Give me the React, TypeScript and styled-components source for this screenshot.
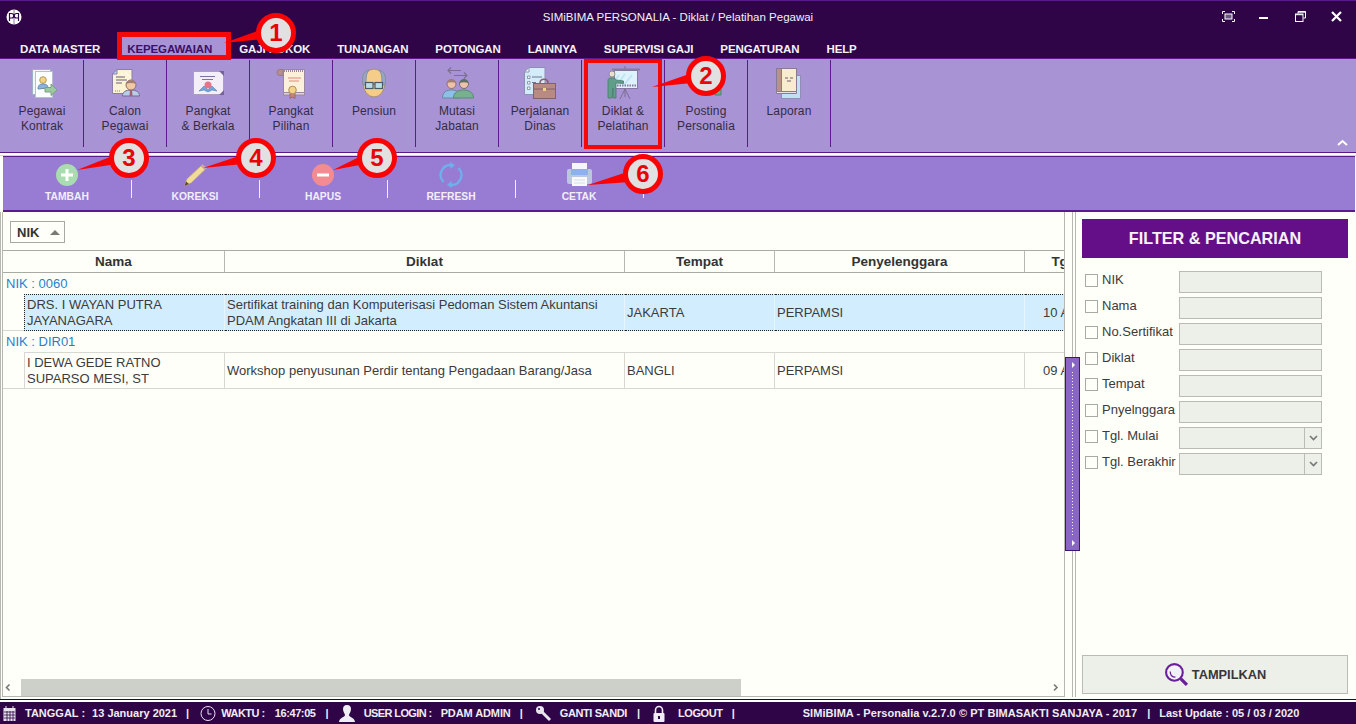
import React from 'react';
import styled, { createGlobalStyle } from 'styled-components';

const Global = createGlobalStyle`
  html, body { margin: 0; padding: 0; width: 1356px; height: 724px; overflow: hidden; background: #fffff9; }
  * { box-sizing: border-box; }
  body { font-family: "Liberation Sans", Arial, sans-serif; }
`;

const Page = styled.div`
  position: relative; width: 1356px; height: 724px; display: flex; flex-direction: column; overflow: hidden;
`;
const Header = styled.header`
  height: 59px; background: #2f0548; border-top: 1px solid #5a1a8a; border-bottom: 1px solid #5a1a8a;
  display: flex; flex-direction: column; flex: none;
`;
const TitleBar = styled.div`
  height: 31px; display: flex; align-items: center; position: relative; flex: none; padding-left: 6px;
`;
const TitleText = styled.div`
  position: absolute; left: 0; right: 0; text-align: center; color: #f2f0f6; font-size: 11.5px;
`;
const WinBtns = styled.div`
  position: absolute; right: 2px; top: 0; height: 31px; display: flex; align-items: center;
`;
const WinBtn = styled.div`
  width: 36px; height: 31px; display: flex; align-items: center; justify-content: center; color: #fff;
`;
const MenuBar = styled.nav`
  display: flex; height: 24px; margin-top: 2px; padding-left: 6.5px; flex: none;
`;
const MenuItem = styled.div<{ $active?: boolean }>`
  margin: 0 ${p => (p.$active ? '0' : '3px')} 0 3px; padding: 3px ${p => (p.$active ? '13.5px' : '10.5px')} 0 10.5px; height: 24px; line-height: 24px; font-size: 11.5px; font-weight: 700; white-space: nowrap; letter-spacing: -0.12px;
  color: ${p => (p.$active ? '#3a1068' : '#f4f2f8')};
  background: ${p => (p.$active ? '#a893d4' : 'transparent')};
`;
const Ribbon = styled.div`
  height: 93px; background: #a893d4; display: flex; flex: none; position: relative; padding: 1px 0 0 1px;
`;
const RibbonItem = styled.div`
  width: 83px; height: 87px; border-right: 1px solid #5c1a8c; display: flex; flex-direction: column; align-items: center; padding-top: 6px; flex: none;
`;
const RibbonIcon = styled.svg`
  width: 36px; height: 34px; flex: none; overflow: visible;
`;
const RibbonLabel = styled.div`
  margin-top: 4px; width: 82px; text-align: center; font-size: 12px; line-height: 15px; color: #342c46; letter-spacing: 0.01em;
`;
const Collapse = styled.svg`
  position: absolute; right: 8px; bottom: 5px; width: 11px; height: 8px;
`;
const RibbonEdge = styled.div`
  height: 4px; flex: none; border-top: 1px solid #5a1a8a; background: #fff; border-bottom: 1px solid #d6d6d0;
`;
const Toolbar = styled.div`
  height: 56px; margin-left: 3px; margin-right: 1px; background: #987cd4; border-bottom: 2px solid #5a1a8a; border-top: 1px solid #5a1a8a; display: flex; flex: none; padding-top: 5px;
`;
const ToolItem = styled.div`
  width: 128px; height: 43px; display: flex; flex-direction: column; align-items: center; position: relative; flex: none;
  &::after { content: ''; position: absolute; right: -1px; top: 18px; height: 18px; border-right: 1px solid #f2eefa; }
`;
const ToolIcon = styled.svg`
  width: 26px; height: 26px; flex: none;
`;
const ToolLabel = styled.div`
  margin-top: 2px; font-size: 10.3px; line-height: 13px; font-weight: 700; color: #f2eefa;
`;
const Main = styled.main`
  flex: 1; display: flex; min-height: 0; background: #fffff9; border-left: 1px solid #b6b8b0;
`;
const LeftPanel = styled.section`
  width: 1063px; margin-left: 1px; border: 1px solid #b6b8b0; border-top: none; display: flex; flex-direction: column; position: relative; flex: none; margin-bottom: 2px; overflow: hidden;
`;
const GroupBar = styled.div`
  height: 38px; padding: 9px 0 0 7px; flex: none;
`;
const NikChip = styled.div`
  width: 55px; height: 22px; border: 1px solid #a8a8a4; display: flex; align-items: center; padding-left: 6px; font-size: 13px; font-weight: 700; color: #333; gap: 11px;
`;
const ChipArrow = styled.span`
  width: 0; height: 0; border-left: 5px solid transparent; border-right: 5px solid transparent; border-bottom: 5px solid #7a7a74;
`;
const Grid = styled.div`
  width: 1061px; overflow: hidden; flex: none;
`;
const Row = styled.div`
  display: grid; grid-template-columns: 222px 400px 150px 250px 116px; width: 1138px;
`;
const HeadCell = styled.div`
  height: 23px; border-top: 1px solid #a8aaa4; border-bottom: 1px solid #a8aaa4; border-right: 1px solid #b6b8b0; text-align: center; font-size: 13.5px; font-weight: 700; color: #333; line-height: 21px; white-space: nowrap;
`;
const GroupRow = styled.div`
  height: 21px; padding-left: 3px; font-size: 13px; line-height: 21px; color: #1f7fcf;
`;
const DataRow = styled.div`
  display: grid; grid-template-columns: 21px 201px 400px 150px 250px 116px; width: 1138px; height: 37px;
`;
const Indent = styled.div`
  border-bottom: 1px solid #d8d8d2;
`;
const Cell = styled.div<{ $selected?: boolean }>`
  display: flex; align-items: center; padding-left: 2px; font-size: 13px; line-height: 16px; color: #3c3a3a; white-space: pre-line;
  background: ${p => (p.$selected ? '#d2eefe' : 'transparent')};
  border-bottom: 1px ${p => (p.$selected ? 'dotted #222' : 'solid #d8d8d2')};
  border-top: 1px ${p => (p.$selected ? 'dotted #222' : 'solid #d8d8d2')};
  border-right: 1px solid ${p => (p.$selected ? '#e6f6ff' : '#d8d8d2')};
`;
const NameCell = styled(Cell)`
  border-left: 1px ${p => (p.$selected ? 'dotted #222' : 'solid #d8d8d2')};
`;
const DateCell = styled(Cell)`
  white-space: nowrap; justify-content: center; padding: 0 3px 0 0;
`;
const HScroll = styled.div`
  position: absolute; left: 0; right: 0; bottom: 0; height: 17px; display: flex; align-items: center;
`;
const ScrollArrow = styled.svg`
  width: 18px; height: 17px; flex: none;
`;
const ScrollThumb = styled.div`
  width: 720px; height: 17px; background: #ccd0c8; flex: none;
`;
const ScrollSpace = styled.div` flex: 1; `;
const SplitColumn = styled.div`
  width: 11px; flex: none; display: flex; position: relative; margin-bottom: 2px;
  border-right: 1px solid #b6b8b0;
  &::before { content: ''; position: absolute; left: 7px; top: 0; bottom: 0; border-left: 1px solid #b6b8b0; }
`;
const Splitter = styled.div`
  position: absolute; left: 0; top: 145px; width: 15px; height: 194px; background: #8a66c4; border: 1px solid #3f1470; z-index: 1;
  display: flex; justify-content: center; padding: 14px 0;
  &::after { content: ''; width: 1px; background: repeating-linear-gradient(to bottom, #f2eefa 0 1px, transparent 1px 3px); }
`;
const SplitArrowTop = styled.span`
  position: absolute; left: 6px; top: 4px; width: 0; height: 0; border-top: 3px solid transparent; border-bottom: 3px solid transparent; border-left: 3px solid #fff;
`;
const SplitArrowBottom = styled(SplitArrowTop)`
  top: auto; bottom: 4px;
`;
const RightPanel = styled.aside`
  flex: 1; padding: 7px 8px 5px 6px; display: flex; flex-direction: column; min-width: 0;
`;
const FilterTitle = styled.div`
  height: 39px; background: #640f88; color: #f4f2f8; font-size: 16.2px; font-weight: 700; display: flex; align-items: center; justify-content: center; flex: none;
`;
const FilterList = styled.div`
  margin-top: 13px; display: flex; flex-direction: column; gap: 4px; flex: 1;
`;
const FilterRow = styled.div`
  display: flex; height: 22px; align-items: center;
`;
const Check = styled.div`
  width: 13px; height: 13px; border: 1px solid #a8aaa6; margin-left: 3px; flex: none; margin-top: -4px;
`;
const FilterLabel = styled.div`
  width: 81px; padding-left: 4px; font-size: 13px; color: #3c3a3a; flex: none; white-space: nowrap; margin-top: -5px;
`;
const FilterInput = styled.div`
  width: 143px; height: 22px; background: #edefe9; border: 1px solid #b8bcb4; flex: none; display: flex; justify-content: flex-end;
`;
const SelectBtn = styled.div`
  width: 17px; border-left: 1px solid #b8bcb4; display: flex; align-items: center; justify-content: center;
`;
const ShowButton = styled.button`
  height: 39px; flex: none; padding: 0; background: #edefe9; border: 1px solid #b8bcb4; display: flex; align-items: center; justify-content: center; gap: 3px; font-family: inherit; font-size: 12.8px; font-weight: 700; color: #38363a;
`;
const StatusWrap = styled.footer`
  height: 25px; flex: none; border-top: 1px solid #2f0548;
`;
const StatusInner = styled.div`
  height: 24px; border-top: 2px solid #fff; background: #2f0548; display: flex; align-items: center; color: #efedf3; font-size: 11px; font-weight: 700; white-space: nowrap; position: relative;
`;
const StatIcon = styled.svg<{ $l: number; $w: number }>`
  width: ${p => p.$w}px; height: 17px; margin-left: ${p => p.$l}px; flex: none;
`;
const StatText = styled.span<{ $l: number; $tight?: number }>`
  margin-left: ${p => p.$l}px;
  letter-spacing: ${p => p.$tight ?? 0}px;
`;
const Overlay = styled.svg`
  position: absolute; left: 0; top: 0; width: 1356px; height: 724px; pointer-events: none;
`;
const RedBox = styled.div<{ $x: number; $y: number; $w: number; $h: number; $b: number }>`
  position: absolute; left: ${p => p.$x}px; top: ${p => p.$y}px; width: ${p => p.$w}px; height: ${p => p.$h}px; border: ${p => p.$b}px solid #f40808; pointer-events: none;
`;
const Bubble = styled.div<{ $x: number; $y: number }>`
  position: absolute; left: ${p => p.$x - 20}px; top: ${p => p.$y - 20}px; width: 40px; height: 40px; border-radius: 50%; background: #e1e1e1; border: 5px solid #f80404; display: flex; align-items: center; justify-content: center; color: #e80505; font-size: 24px; font-weight: 700; font-family: "Liberation Sans", sans-serif;
`;

const line = '#8b7ea6';
const icons: Record<string, React.ReactNode> = {
  kontrak: (<><rect x="8.500" y="3.500" width="18" height="25" fill="#f2f6f8" stroke="#9fb0c4" /><rect x="11.500" y="5.500" width="17" height="26" fill="#fdfefe" stroke="#b4bfd0" /><circle cx="19" cy="14" r="3.300" fill="#f4d48a" stroke="#b89a5e" /><path d="M14 23c0-4 2-5 5-5s5 1 5 4z" fill="#8ab4dc" stroke="#6a8cae" /><path d="M21 21.500h6V18l6 6-6 5.500V26h-6z" fill="#9ccaa0" stroke="#7aa282" /></>),
  calon: (<><path d="M10 3.500h15v24H5.500V8z" fill="#fbf3d2" stroke={line} /><path d="M10 3.500V8H5.500z" fill="#b9d8ee" stroke={line} /><path d="M14 7l9 9M18 6l6 6" stroke="#fffbe6" strokeWidth="1.500" /><path d="M9 11h9M9 14h11M9 17h6" stroke="#6d5f80" strokeWidth="1.200" /><path d="M8 25h6" stroke={line} strokeDasharray="1 1" /><path d="M15.500 30c0-4 3-6 8.500-6s8.500 2 8.500 6z" fill="#b5cfe8" stroke="#75688c" /><circle cx="24" cy="19" r="5" fill="#f2c9a6" stroke="#8e6f6a" /><path d="M19 18c0-5 10-5 10 0-3-1.500-7-1.500-10 0z" fill="#a17f76" /><path d="M23 24h2l.5 6h-3z" fill="#a45e72" /></>),
  pangkat: (<><rect x="3.500" y="5.500" width="30" height="23" fill="#f3eef8" stroke="#a99dc0" /><path d="M29 5h5v5zM29 29h5v-5z" fill="#75629a" /><path d="M10 10.500h15M12 13.500h11" stroke="#8072a0" strokeWidth="1.200" /><path d="M9 25l5-5 4 4 4-4 5 5-5-1-4 2-4-2z" fill="#6fa6dc" stroke="#4f7eb4" strokeWidth=".6" /><circle cx="18" cy="19" r="3.500" fill="#e8748a" /></>),
  pilihan: (<><path d="M10.500 3.500h21v23h-21z" fill="#fbf0da" stroke="#9a86a0" /><path d="M10 3.500H7a3 3 0 0 0 0 6h3z" fill="#b58f8c" stroke="#9a7a80" /><path d="M11 5h20" stroke="#9a86a0" strokeDasharray="1 1" strokeWidth="2" /><path d="M15 12h13M16 15h10" stroke="#e08a7a" strokeWidth="1.200" /><path d="M10.500 26.500h21v2.500h-21z" fill="#e3d3d6" stroke="#9a86a0" /><path d="M17 26v6.500l2.500-1.500 2.500 1.500V26z" fill="#c8827a" stroke="#9a6a70" /><circle cx="19.500" cy="24" r="3.800" fill="#f4d48a" stroke="#ae9058" /></>),
  pensiun: (<><ellipse cx="18" cy="17" rx="11" ry="14" fill="#f4cd8a" stroke="#a88e72" /><path d="M7 19C5 8 9 5 13 4c-3 3-3 9-3 15zM29 19c2-11-2-14-6-15 3 3 3 9 3 15z" fill="#98a6c0" stroke="#8490a6" /><rect x="9.500" y="16.500" width="7.500" height="6" fill="#b8e0e4" stroke="#4a5a62" strokeWidth="1.200" /><rect x="19" y="16.500" width="7.500" height="6" fill="#b8e0e4" stroke="#4a5a62" strokeWidth="1.200" /><path d="M17 18h2" stroke="#4a5a62" /></>),
  mutasi: (<><path d="M9 4.500h13M12 1.500l-3 3 3 3M28 9.500H15M25 6.500l3 3-3 3" fill="none" stroke="#7d6d94" strokeWidth="1.100" /><circle cx="12.500" cy="18" r="4.500" fill="#eec1a8" stroke="#8e6f6a" /><path d="M8 17c0-5 9-5 9 0-3-1-6-1-9 0z" fill="#a17f76" /><path d="M3.500 32c0-6 4-8 9-8s9 2 9 8z" fill="#8cc0e4" stroke="#6a86a6" /><circle cx="25" cy="18" r="4.500" fill="#eec1a8" stroke="#6d6f6a" /><path d="M20.500 17c0-5 9-5 9 0-3-1-6-1-9 0z" fill="#5d6e64" /><path d="M14.500 32c0-6 5-8 10-8s10 2 10 8z" fill="#76b08e" stroke="#5a8a74" /></>),
  dinas: (<><path d="M7 1.500h16v27H2.500V6z" fill="#d4ecfa" stroke="#8f8fb4" /><path d="M7 1.500V6H2.500z" fill="#f6fafc" stroke="#8f8fb4" /><path d="M5.500 10h2.500v2.500H5.500zM5.500 15.500h2.500V18H5.500zM5.500 21h2.500v2.500H5.500z" fill="#fff" stroke="#6a7a8e" strokeWidth=".7" /><path d="M10 11h10M10 16.500h4" stroke="#6a7a8e" /><rect x="11.500" y="17.500" width="22" height="15" fill="#b88b82" stroke="#84606a" /><path d="M11.500 23h22" stroke="#84606a" /><path d="M18 17c0-5 8-5 8 0" fill="none" stroke="#84606a" strokeWidth="1.500" /><rect x="21" y="22" width="3" height="3" fill="#f0d28a" /></>),
  diklat: (<><path d="M20 0v3M20 23l-5 10M20 23l5 10M20 23v8" stroke="#7d6d94" fill="none" /><rect x="9.500" y="4.500" width="23" height="18" fill="#ddf2fa" stroke="#86789e" /><path d="M7 3.500h28" stroke="#86789e" strokeWidth="2" /><path d="M14 9l-4 5M20 8l-6 8M27 9l-8 10" stroke="#bfe4f4" strokeWidth="2" /><path d="M12 19.500h19" stroke="#86789e" strokeDasharray="1.500 1" strokeWidth="2" /><path d="M3 32V15c0-2 1-3 3.500-3 2 0 3.500.5 5 2l7 1v2.500l-7.500-.5V32H8v-10l-1 10z" fill="#5f9e88" stroke="#4a7a70" strokeWidth=".8" /><circle cx="7" cy="8" r="3" fill="#eadfc8" stroke="#7a8a80" strokeWidth=".8" /></>),
  posting: (<><rect x="9.500" y="3.500" width="19" height="24" fill="#eaf2f8" stroke="#8f8fb4" /><path d="M27 21h6v8h-6z" fill="#6fa888" stroke="#567f72" /></>),
  laporan: (<><rect x="10.500" y="9.500" width="19" height="23" fill="#c2e0f4" stroke="#8f8fb4" /><rect x="5.500" y="2.500" width="20" height="23" fill="#f8ecd0" stroke="#8a7a94" /><rect x="5.500" y="2.500" width="5" height="23" fill="#b8918a" stroke="#8a7a94" /><path d="M5.500 25.500h20v2h-20z" fill="#e8e2e8" stroke="#8a7a94" /><path d="M14 12h3M19 12h3M16 15h4" stroke="#6a5e6a" /></>),
};

const ribbon = [
  ['Pegawai\nKontrak', 'kontrak'], ['Calon\nPegawai', 'calon'], ['Pangkat\n& Berkala', 'pangkat'], ['Pangkat\nPilihan', 'pilihan'],
  ['Pensiun', 'pensiun'], ['Mutasi\nJabatan', 'mutasi'], ['Perjalanan\nDinas', 'dinas'], ['Diklat &\nPelatihan', 'diklat'],
  ['Posting\nPersonalia', 'posting'], ['Laporan', 'laporan'],
];
const menu = ['DATA MASTER', 'KEPEGAWAIAN', 'GAJI POKOK', 'TUNJANGAN', 'POTONGAN', 'LAINNYA', 'SUPERVISI GAJI', 'PENGATURAN', 'HELP'];

const tools: [string, React.ReactNode][] = [
  ['TAMBAH', (<><circle cx="13" cy="13" r="11" fill="#a9dcb0" /><path d="M13 7v12M7 13h12" stroke="#fff" strokeWidth="3" /></>)],
  ['KOREKSI', (<><path d="M2.500 24l2.500-7L19 4l4 3.500L9.500 20.500z" fill="#f2dc9a" stroke="#c8b070" strokeWidth=".8" /><path d="M2.500 24l1.500-4.500 3 2.500z" fill="#5a4a3a" /><path d="M19 4l1.500-1.500 4 3.500L23 7.500z" fill="#e8a0a0" stroke="#a8a8b0" strokeWidth=".8" /></>)],
  ['HAPUS', (<><circle cx="13" cy="13" r="11" fill="#f28c92" /><path d="M7 13h12" stroke="#fff" strokeWidth="3" /></>)],
  ['REFRESH', (<><path d="M5.500 20A10 10 0 0 1 14 3.100" fill="none" stroke="#6db0ec" strokeWidth="2.300" /><path d="M12 0l5 3.300-4.500 3.700z" fill="#6db0ec" /><path d="M20.500 6A10 10 0 0 1 12 22.900" fill="none" stroke="#6db0ec" strokeWidth="2.300" /><path d="M14 26l-5-3.300 4.500-3.700z" fill="#6db0ec" /></>)],
  ['CETAK', (<><rect x="6" y="1" width="15" height="7" fill="#f4f6fa" /><path d="M3 7h21a2 2 0 0 1 2 2v11a2 2 0 0 1-2 2H3a2 2 0 0 1-2-2V9a2 2 0 0 1 2-2z" fill="#bcc6de" /><rect x="5" y="7" width="17" height="6" fill="#8fb0ee" /><rect x="6" y="15" width="15" height="9" fill="#f8f9fb" /><path d="M8 18h11M8 21h11" stroke="#d8dde8" /></>)],
];

const filters: [string, boolean][] = [['NIK', false], ['Nama', false], ['No.Sertifikat', false], ['Diklat', false], ['Tempat', false], ['Pnyelnggara', false], ['Tgl. Mulai', true], ['Tgl. Berakhir', true]];

const pointers = ['260,30 224,43 264,39', '692,73 652,87 692,83', '115,155 77,170 117,164', '242,155 203,168 243,164', '363,155 333,170 365,164', '627,172 588,185 630,182'];

export default function App() {
  return (
    <Page>
      <Global />
      <Header>
        <TitleBar>
          <svg width="16" height="16" viewBox="0 0 16 16"><circle cx="8" cy="8" r="7.500" fill="#fff" /><path d="M8 1v14" stroke="#8a7a98" /><path d="M3.500 12V4.500h2a2 2 0 0 1 0 4.500h-2M12.500 12V4.500h-2a2 2 0 0 0 0 4.500h2" fill="none" stroke="#2f0548" strokeWidth="1.200" /></svg>
          <TitleText>SIMiBIMA PERSONALIA - Diklat / Pelatihan Pegawai</TitleText>
          <WinBtns>
            <WinBtn><svg width="13" height="11" viewBox="0 0 13 11" fill="none" stroke="#fff"><path d="M.5 3V.5H3M10 .5h2.500V3M12.500 8v2.500H10M3 10.500H.5V8" /><rect x="3" y="3" width="7" height="5" fill="#6a5488" /></svg></WinBtn>
            <WinBtn><svg width="10" height="5" viewBox="0 0 10 5"><rect width="9" height="2" y="3" fill="#fff" /></svg></WinBtn>
            <WinBtn><svg width="11" height="11" viewBox="0 0 11 11" fill="none" stroke="#fff"><path d="M3 2.500V.5h7.500V7H8.500" /><rect x=".5" y="3" width="7.500" height="7.500" /><path d="M3 1.200h7.500M.5 3.700H8" /></svg></WinBtn>
            <WinBtn><svg width="11" height="11" viewBox="0 0 11 11"><path d="M1 1l9 9M10 1L1 10" stroke="#fff" strokeWidth="2.200" /></svg></WinBtn>
          </WinBtns>
        </TitleBar>
        <MenuBar>
          {menu.map(m => <MenuItem key={m} $active={m === 'KEPEGAWAIAN'}>{m}</MenuItem>)}
        </MenuBar>
      </Header>
      <Ribbon>
        {ribbon.map(([l, k]) => (
          <RibbonItem key={k}>
            <RibbonIcon viewBox="0 0 36 34">{icons[k]}</RibbonIcon>
            <RibbonLabel>{l.split('\n').map(t => <div key={t}>{t}</div>)}</RibbonLabel>
          </RibbonItem>
        ))}
        <Collapse viewBox="0 0 11 8"><path d="M1 6l4.500-4L10 6" fill="none" stroke="#fff" strokeWidth="2" /></Collapse>
      </Ribbon>
      <RibbonEdge />
      <Toolbar>
        {tools.map(([l, ic]) => (
          <ToolItem key={l}>
            <ToolIcon viewBox="0 0 26 26">{ic}</ToolIcon>
            <ToolLabel>{l}</ToolLabel>
          </ToolItem>
        ))}
      </Toolbar>
      <Main>
        <LeftPanel>
          <GroupBar><NikChip>NIK<ChipArrow /></NikChip></GroupBar>
          <Grid>
            <Row>
              <HeadCell>Nama</HeadCell><HeadCell>Diklat</HeadCell><HeadCell>Tempat</HeadCell><HeadCell>Penyelenggara</HeadCell><HeadCell>Tgl. Mulai</HeadCell>
            </Row>
            <GroupRow>NIK : 0060</GroupRow>
            <DataRow>
              <Indent />
              <NameCell $selected>{'DRS. I WAYAN PUTRA\nJAYANAGARA'}</NameCell>
              <Cell $selected>{'Sertifikat training dan Komputerisasi Pedoman Sistem Akuntansi\nPDAM Angkatan III di Jakarta'}</Cell>
              <Cell $selected>JAKARTA</Cell>
              <Cell $selected>PERPAMSI</Cell>
              <DateCell $selected>10 April 2010</DateCell>
            </DataRow>
            <GroupRow>NIK : DIR01</GroupRow>
            <DataRow>
              <Indent />
              <NameCell>{'I DEWA GEDE RATNO\nSUPARSO MESI, ST'}</NameCell>
              <Cell>Workshop penyusunan Perdir tentang Pengadaan Barang/Jasa</Cell>
              <Cell>BANGLI</Cell>
              <Cell>PERPAMSI</Cell>
              <DateCell>09 April 2012</DateCell>
            </DataRow>
          </Grid>
          <HScroll>
            <ScrollArrow viewBox="0 0 18 17"><path d="M6.500 5.500l-3 3 3 3" fill="none" stroke="#777" strokeWidth="1.600" /></ScrollArrow>
            <ScrollThumb />
            <ScrollSpace />
            <ScrollArrow viewBox="0 0 18 17"><path d="M8 5.500l3 3-3 3" fill="none" stroke="#777" strokeWidth="1.600" /></ScrollArrow>
          </HScroll>
        </LeftPanel>
        <SplitColumn>
          <Splitter><SplitArrowTop /><SplitArrowBottom /></Splitter>
        </SplitColumn>
        <RightPanel>
          <FilterTitle>FILTER &amp; PENCARIAN</FilterTitle>
          <FilterList>
            {filters.map(([l, sel]) => (
              <FilterRow key={l}>
                <Check />
                <FilterLabel>{l}</FilterLabel>
                <FilterInput>
                  {sel && <SelectBtn><svg width="9" height="6" viewBox="0 0 9 6"><path d="M1 1l3.500 3.500L8 1" fill="none" stroke="#777" strokeWidth="1.600" /></svg></SelectBtn>}
                </FilterInput>
              </FilterRow>
            ))}
          </FilterList>
          <ShowButton>
            <svg width="25" height="25" viewBox="0 0 24 24"><circle cx="10" cy="10" r="8" fill="#f4f0f8" stroke="#6a1f9a" strokeWidth="2" /><path d="M6 9c0 3.500 2 5.500 5 5.500" fill="none" stroke="#6a1f9a" strokeWidth="1.200" /><path d="M16 16l6 6" stroke="#6a1f9a" strokeWidth="3.200" /></svg>
            TAMPILKAN
          </ShowButton>
        </RightPanel>
      </Main>
      <StatusWrap>
        <StatusInner>
          <StatIcon $l={3} $w={13} viewBox="0 0 13 17"><rect x=".5" y="3" width="12" height="13" fill="#e8e4ee" /><path d="M1 7h11M1 10h11M1 13h11M4 6v10M7 6v10M10 6v10" stroke="#2f0548" strokeWidth=".8" /><path d="M3 1v3M10 1v3" stroke="#e8e4ee" /></StatIcon>
          <StatText $l={9}>TANGGAL :</StatText>
          <StatText $l={7}>13 January 2021</StatText>
          <StatText $l={9}>|</StatText>
          <StatIcon $l={11} $w={16} viewBox="0 0 16 17"><circle cx="8" cy="8.500" r="7" fill="none" stroke="#e8e4ee" /><path d="M8 4v5h3.500" fill="none" stroke="#e8e4ee" /></StatIcon>
          <StatText $l={5} $tight={-0.5}>WAKTU :</StatText>
          <StatText $l={10} $tight={-0.4}>16:47:05</StatText>
          <StatText $l={10}>|</StatText>
          <StatIcon $l={10} $w={16} viewBox="0 0 16 17"><path d="M8 0c3 0 4 2 4 4 0 3-2 5-2 6 0 2 6 3 6 7H0c0-4 6-5 6-7 0-1-2-3-2-6 0-2 1-4 4-4z" fill="#f0edf4" /></StatIcon>
          <StatText $l={9} $tight={-0.6}>USER LOGIN :</StatText>
          <StatText $l={9} $tight={-0.1}>PDAM ADMIN</StatText>
          <StatText $l={9}>|</StatText>
          <StatIcon $l={12} $w={17} viewBox="0 0 17 17"><circle cx="5" cy="5" r="4" fill="#e8e4ee" /><circle cx="4" cy="4" r="1" fill="#2f0548" /><path d="M7 7l8 8" stroke="#e8e4ee" strokeWidth="3" /></StatIcon>
          <StatText $l={8} $tight={-0.4}>GANTI SANDI</StatText>
          <StatText $l={10}>|</StatText>
          <StatIcon $l={11} $w={16} viewBox="0 0 16 17"><path d="M4.500 8V5a3.500 3.500 0 0 1 7 0v3" fill="none" stroke="#f0edf4" strokeWidth="1.600" /><rect x="2.500" y="8" width="11" height="9" rx="1" fill="#f0edf4" /><rect x="7" y="11" width="2" height="3" fill="#2f0548" /></StatIcon>
          <StatText $l={11} $tight={-0.4}>LOGOUT</StatText>
          <StatText $l={9}>|</StatText>
          <StatText $l={68} $tight={0.05}>SIMiBIMA - Personalia v.2.7.0 © PT BIMASAKTI SANJAYA - 2017</StatText>
          <StatText $l={10}>|</StatText>
          <StatText $l={9}>Last Update : 05 / 03 / 2020</StatText>
        </StatusInner>
      </StatusWrap>
      <RedBox $x={117} $y={32} $w={114} $h={28} $b={5} />
      <RedBox $x={584} $y={59} $w={78} $h={90} $b={4} />
      <Overlay viewBox="0 0 1356 724">
        {pointers.map(p => <polygon key={p} points={p} fill="#f80404" />)}
      </Overlay>
      <Bubble $x={276} $y={33}>1</Bubble>
      <Bubble $x={706} $y={76}>2</Bubble>
      <Bubble $x={129} $y={158}>3</Bubble>
      <Bubble $x={256} $y={158}>4</Bubble>
      <Bubble $x={377} $y={158}>5</Bubble>
      <Bubble $x={643} $y={174}>6</Bubble>
    </Page>
  );
}
